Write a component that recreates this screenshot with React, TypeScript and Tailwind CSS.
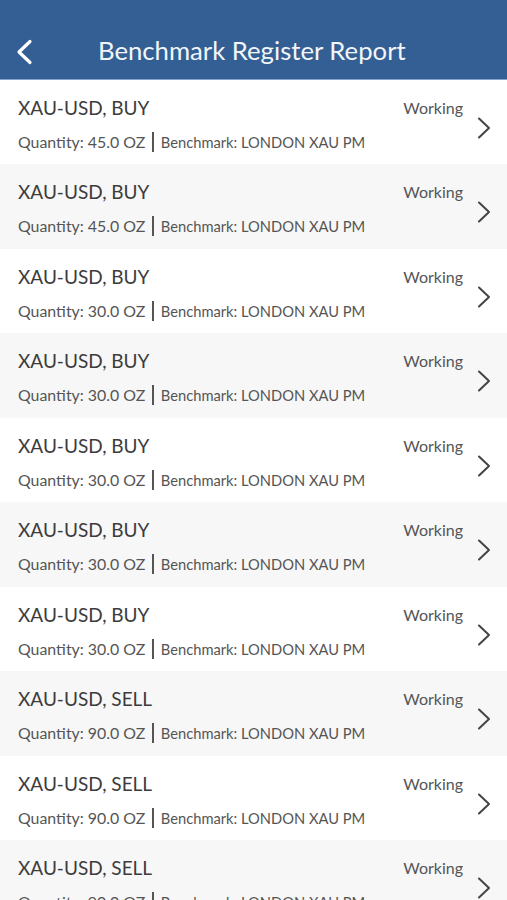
import React from "react";

const rows = [
  { side: "BUY", qty: "45.0" },
  { side: "BUY", qty: "45.0" },
  { side: "BUY", qty: "30.0" },
  { side: "BUY", qty: "30.0" },
  { side: "BUY", qty: "30.0" },
  { side: "BUY", qty: "30.0" },
  { side: "BUY", qty: "30.0" },
  { side: "SELL", qty: "90.0" },
  { side: "SELL", qty: "90.0" },
  { side: "SELL", qty: "90.0" },
];

export default function App() {
  return (
    <div className="w-[507px] h-[900px] overflow-hidden bg-white" style={{ fontFamily: "Lato, 'Noto Sans', sans-serif" }}>
      <header className="h-[80px] bg-[#335f94] border-b border-[#7fa3c9] flex items-center relative">
        <svg className="absolute left-[15px] top-[39px]" width="18" height="26" viewBox="0 0 18 26" fill="none">
          <path d="M15 2.5 L4 13 L15 23.5" stroke="white" strokeWidth="3.2" strokeLinecap="round" strokeLinejoin="round" />
        </svg>
        <h1 className="ml-[98px] mt-[22px] text-[25.7px] leading-none text-[#f2f5f9]">Benchmark Register Report</h1>
      </header>
      <div>
        {rows.map((r, i) => (
          <div key={i} className={`h-[84.44px] flex items-start relative ${i % 2 === 1 ? "bg-[#f7f7f7]" : "bg-white"}`}>
            <div className="pl-[18px] pt-[16px] flex-1">
              <div className="text-[19px] leading-[24px] text-[#3c3c3c]">XAU-USD, {r.side}</div>
              <div className="mt-[12px] flex items-center text-[#555]">
                <span className="text-[15.9px] leading-[20px]">Quantity: {r.qty} OZ</span>
                <span className="mx-[7px] w-[1.5px] h-[20px] bg-[#555]" />
                <span className="text-[14.7px] leading-[20px]">Benchmark: LONDON XAU PM</span>
              </div>
            </div>
            <div className="pt-[18px] pr-[44px] text-[16px] leading-[20px] text-[#555]">Working</div>
            <svg className="absolute left-[476px] top-[37px]" width="16" height="22" viewBox="0 0 16 22" fill="none">
              <path d="M3 1.5 L13 11 L3 20.5" stroke="#444" strokeWidth="2" strokeLinecap="round" strokeLinejoin="round" />
            </svg>
          </div>
        ))}
      </div>
    </div>
  );
}
